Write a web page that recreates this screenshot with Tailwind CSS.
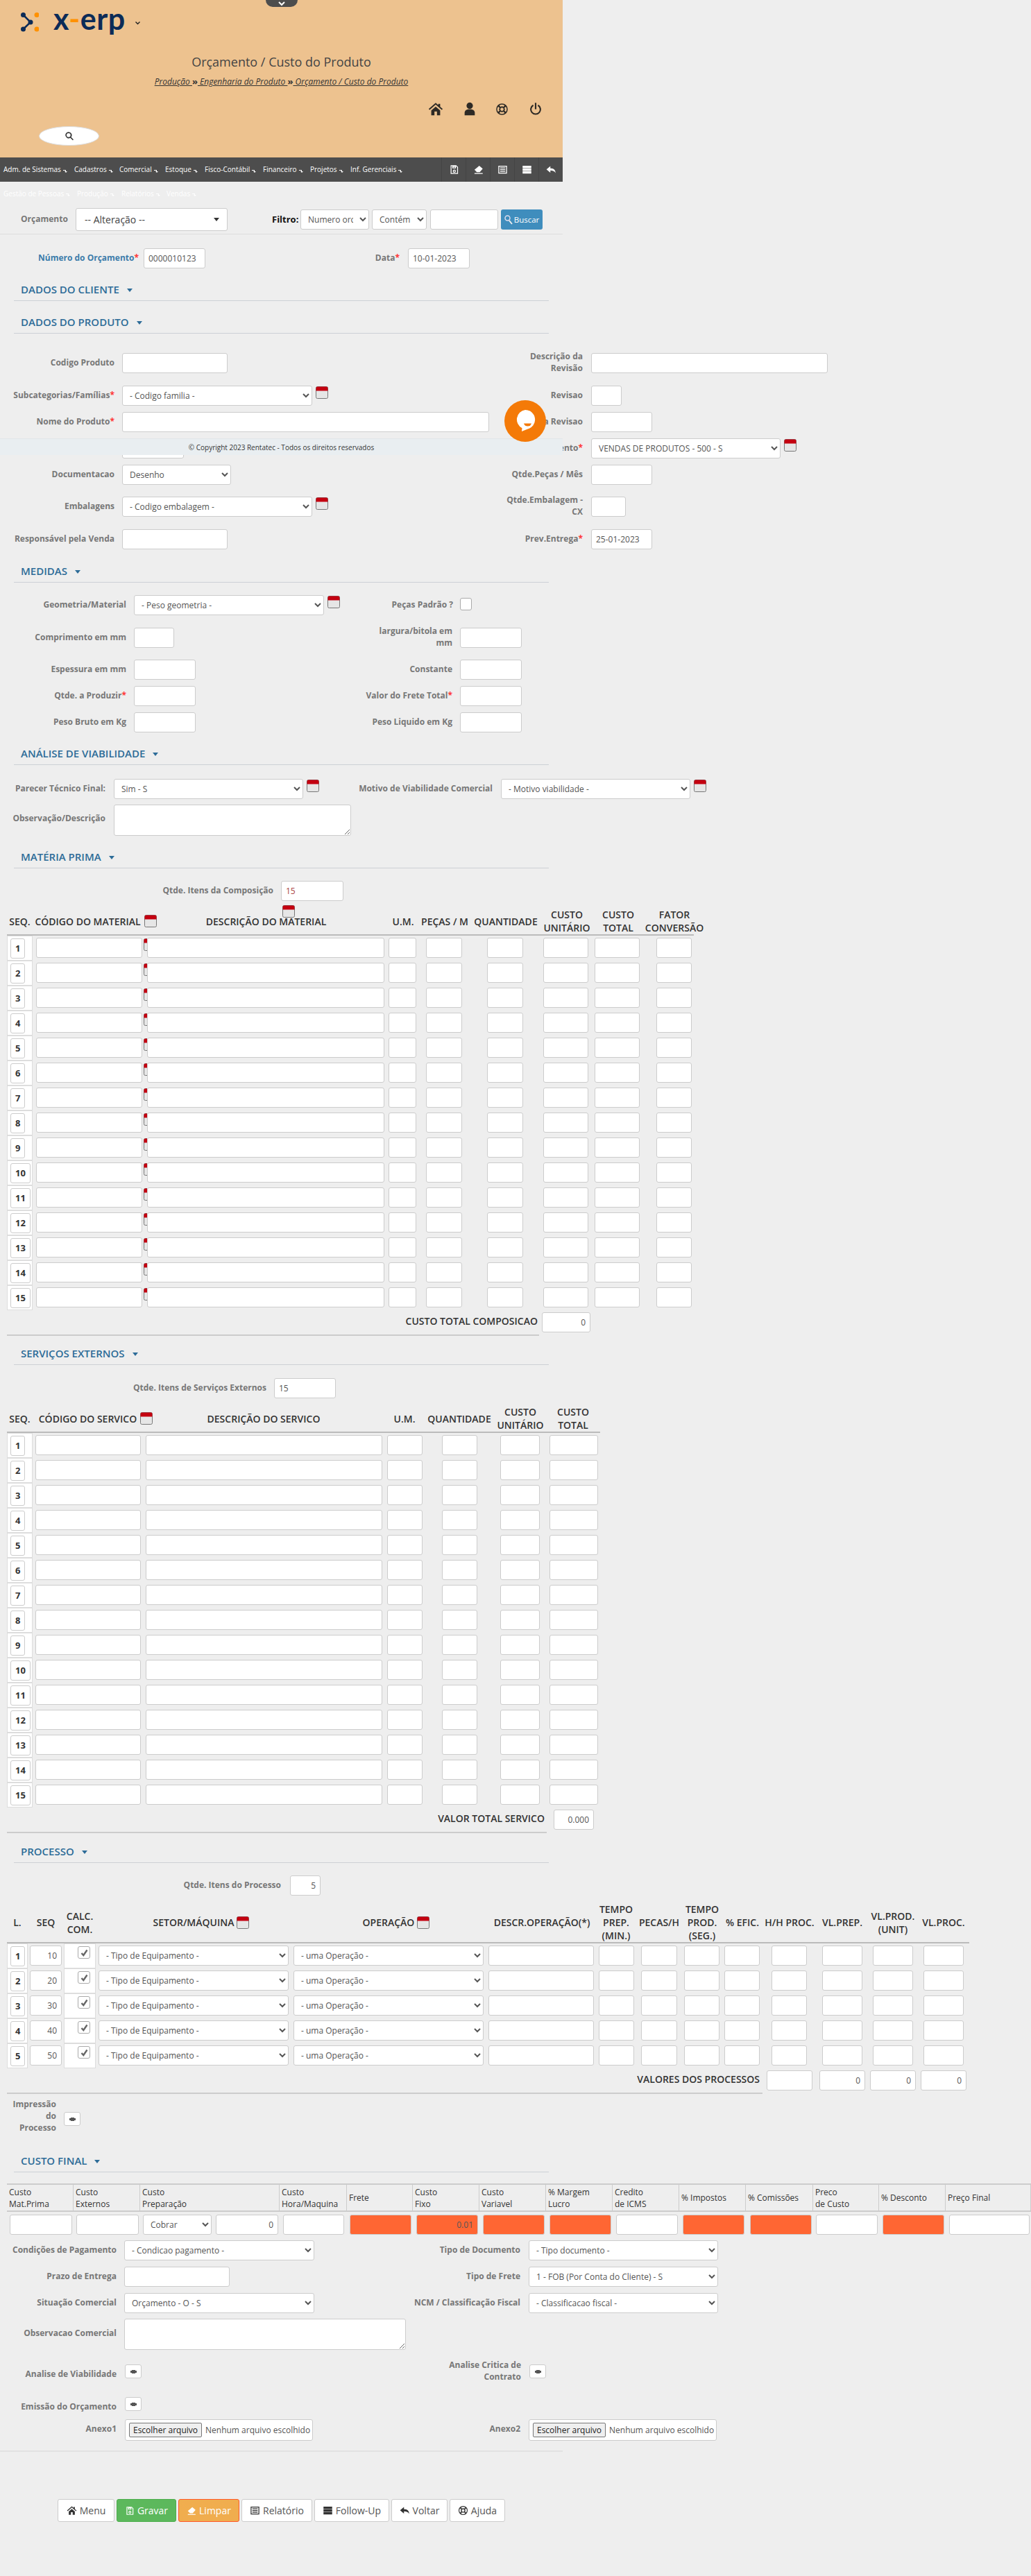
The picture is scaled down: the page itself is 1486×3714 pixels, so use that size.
<!DOCTYPE html>
<html lang="pt-BR">
<head>
    <meta charset="UTF-8">
    <title>Orçamento / Custo do Produto</title>
    <script src="https://cdn.jsdelivr.net/npm/@tailwindcss/browser@4"></script>
</head>
<body class="bg-[#eeeeee] h-[3714px] relative overflow-hidden font-['Open_Sans',sans-serif] text-[12px] text-[#555]">
    <div id="app"></div>

    <!-- top tab, fixed footer and chat bubble lie over the form -->
    <div class="absolute left-[383px] top-0 w-[46px] h-[10px] bg-[#4d4d4d] rounded-b-full flex justify-center items-center">
        <svg width="10" height="7" viewBox="0 0 10 7"><path d="M1 1l4 4 4-4" fill="none" stroke="#fff" stroke-width="2"/></svg>
    </div>
    <div class="absolute left-0 top-[632px] w-[811px] h-[24px] bg-[#e9eef1] border-t border-[#e2e6e9] text-center text-[#333] text-[10px] leading-[24px]">© Copyright 2023 Rentatec - Todos os direitos reservados</div>
    <div class="absolute left-[727px] top-[577px] w-[60px] h-[60px] rounded-full bg-[#f47a08] flex items-center justify-center">
        <svg width="32" height="36" viewBox="0 0 32 36"><path d="M16 2a14 14 0 0 1 3 27.7L11 33l.5-4.700A14 14 0 0 1 16 2z" fill="#fff"/><path d="M14 21.500h11c-1 3-3 4-5.500 4s-4.500-1-5.500-4z" fill="#f47a08"/></svg>
    </div>

    <script>
        const INP = 'block shrink-0 h-[29px] bg-white border border-[#ccc] rounded-[3px] px-[6px] text-[12px] text-[#555] outline-none';
        const LAB = 'shrink-0 text-right font-bold text-[#777] text-[12px] leading-[17px]';
        const TH = 'shrink-0 text-center font-semibold text-[#333] text-[14px] leading-[19px] whitespace-nowrap';

        const ic = {
            home: '<path d="M12 2.500 1 12l1.400 1.500L12 5.300l9.600 8.200L23 12l-4-3.400V4h-3v2z"/><path d="M5 14.500l7-6 7 6V22h-5v-6h-4v6H5z"/>',
            user: '<circle cx="12" cy="7" r="5"/><path d="M4 22v-4c0-3.500 3-5.500 8-5.500s8 2 8 5.500v4z"/>',
            ring: '<path fill-rule="evenodd" d="M12 1.500a10.500 10.500 0 1 0 0 21 10.500 10.500 0 0 0 0-21zm0 2a8.500 8.500 0 0 1 4.800 1.500l-2.200 2.500a5 5 0 0 0-5.200 0L7.200 5A8.500 8.500 0 0 1 12 3.500zM5 7.200l2.500 2.200a5 5 0 0 0 0 5.200L5 16.800a8.500 8.500 0 0 1 0-9.600zm14 0a8.500 8.500 0 0 1 0 9.600l-2.500-2.200a5 5 0 0 0 0-5.200zM12 9a3 3 0 1 1 0 6 3 3 0 0 1 0-6zm-2.600 7.500a5 5 0 0 0 5.200 0l2.200 2.500a8.500 8.500 0 0 1-9.600 0z"/>',
            power: '<path d="M10.700 1.500h2.600v11h-2.600z"/><path d="M7.300 4.500l1.200 2.300a7 7 0 1 0 7 0l1.200-2.300a9.500 9.500 0 1 1-9.400 0z"/>',
            save: '<path fill-rule="evenodd" d="M4 2h13l4 4v16H4zm2 2v16h13V7l-3-3v5H8V4zm5 1v3h2V5zm1.500 7a3.500 3.500 0 1 1 0 7 3.500 3.500 0 0 1 0-7zm0 2a1.500 1.500 0 1 0 0 3 1.500 1.500 0 0 0 0-3z"/>',
            eraser: '<path d="M14 3l8 7-7 8H8.500L3 12.500z"/><path d="M3 20h19v2H3z"/>',
            list: '<path fill-rule="evenodd" d="M2 3h20v18H2zm2 2v14h16V5zm2 2h12v2H6zm0 4h12v2H6zm0 4h12v2H6z"/>',
            grid: '<path d="M2 3h20v5.300H2zm0 6.300h20v5.400H2zm0 6.400h20V21H2z"/>',
            reply: '<path d="M10 4v5c7 0 12 3 12 11-2-4-6-6-12-6v5L1 11.500z"/>',
            search: '<path fill-rule="evenodd" d="M10 2a8 8 0 0 1 6.300 12.900l6 6-2 2-6-6A8 8 0 1 1 10 2zm0 3a5 5 0 1 0 0 10 5 5 0 0 0 0-10z"/>'
        };
        const svg = (name, cls) => `<svg viewBox="0 0 24 24" fill="currentColor" class="${cls}">${ic[name]}</svg>`;

        const cal = () => `<svg viewBox="0 0 18 18" class="shrink-0 w-[18px] h-[18px]"><rect x=".5" y=".5" width="17" height="17" rx="2" fill="#e6e6e6" stroke="#777"/><path d="M.5 6.500V2.500a2 2 0 0 1 2-2h13a2 2 0 0 1 2 2v4z" fill="#c40010"/></svg>`;
        const req = '<span class="text-[#f33]">*</span>';
        const lab = (w, text, star) => `<div class="${LAB} ${w} pt-[5px]">${text}${star ? req : ''}</div>`;
        const lab2 = (w, text) => `<div class="${LAB} ${w} -mt-[4px]">${text}</div>`;
        const inp = (w, val = '', extra = '') => `<input class="${INP} ${w} ${extra}" value="${val}">`;
        const sel = (w, text) => `<select class="${INP} ${w}"><option>${text}</option></select>`;
        const rowTop = (mt, body) => `<div class="flex h-[29px] ${mt}">${body}</div>`;
        const section = (mt, text) => `<div class="ml-[20px] w-[771px] h-[27px] pl-[10px] border-b border-[#ccd0d5] ${mt} font-semibold text-[#2d6c98] text-[15px] leading-[20px] flex gap-[11px]">${text}<span class="mt-[9px] w-0 h-0 border-x-[4px] border-x-transparent border-t-[5px] border-t-[#2d6c98]"></span></div>`;
        const printBtn = (cls) => `<div class="shrink-0 ${cls} w-[24px] h-[20px] bg-white border border-[#ccc] rounded-[3px] flex items-center justify-center"><svg width="9" height="5" viewBox="0 0 9 5"><path d="M2 0h5v1h2v3H7v1H2V4H0V1h2z" fill="#555"/></svg></div>`;
        const seqCell = (n, cls) => `<div class="shrink-0 ${cls} h-[36px] bg-white border border-[#ddd] pt-[3px] pl-[4px]"><div class="inline-flex h-[29px] px-[6px] items-center bg-white border border-[#ccc] rounded-[3px] font-bold text-[#333] text-[13px]">${n}</div></div>`;

        const range = (n) => Array.from({ length: n }, (_, i) => i + 1);

        const navItems = [['Adm. de Sistemas', 'w-[102px]'], ['Cadastros', 'w-[65px]'], ['Comercial', 'w-[66px]'], ['Estoque', 'w-[57px]'], ['Fisco-Contábil', 'w-[84px]'], ['Financeiro', 'w-[68px]'], ['Projetos', 'w-[58px]'], ['Inf. Gerenciais', 'w-[131px]']];
        const navArrow = '<svg width="6" height="5" viewBox="0 0 6 5" class="ml-[3px] mt-[3px]"><path d="M0 1h4v2h2L4 5 2 3h1V2H0z" fill="currentColor"/></svg>';
        const nav = navItems.map(([t, w]) => `<div class="${w} flex items-center whitespace-nowrap">${t}${navArrow}</div>`).join('');
        const navIcons = ['save', 'eraser', 'list', 'grid', 'reply'].map(n => `<div class="w-[35px] border-l border-[#444] flex items-center justify-center text-white">${svg(n, 'w-[15px] h-[15px]')}</div>`).join('');
        const nav2 = [['Gestão de Pessoas', 'w-[106px]'], ['Produção', 'w-[64px]'], ['Relatórios', 'w-[65px]'], ['Vendas', 'w-[60px]']].map(([t, w]) => `<div class="${w} flex items-center whitespace-nowrap">${t}${navArrow}</div>`).join('');

        const header = `
        <div class="w-[811px] h-[227px] bg-[#edc28f] pt-[18px] text-[#333]">
            <div class="ml-[30px] h-[34px] flex">
                <svg width="26" height="30" viewBox="0 0 26 30" class="shrink-0"><path d="M3.500 3.500 14 14 3.500 24" fill="none" stroke="#0c2b57" stroke-width="2.500"/><circle cx="3.500" cy="3.500" r="3.500" fill="#0c2b57"/><circle cx="3.500" cy="24" r="3.500" fill="#0c2b57"/><circle cx="14" cy="14" r="3.500" fill="#0c2b57"/><circle cx="23" cy="3.500" r="3.500" fill="#ff9100"/><circle cx="23" cy="24" r="3.500" fill="#ff9100"/></svg>
                <div class="ml-[21px] -mt-[6px] font-['Lato',sans-serif] font-bold text-[43px] leading-[30px] text-[#0c2b57] tracking-[0.5px] whitespace-nowrap">x<span class="text-[#ff9100]">-</span>erp</div>
                <svg width="7" height="5" viewBox="0 0 7 5" class="ml-[14px] mt-[13px]"><path d="M.5.500l3 3 3-3" fill="none" stroke="#222" stroke-width="1.400"/></svg>
            </div>
            <div class="mt-[23px] h-[28px] text-center text-[#444] text-[18px] leading-[28px]">Orçamento / Custo do Produto</div>
            <div class="mt-[5px] h-[18px] text-center italic text-[#333] text-[12px] leading-[18px]"><span class="underline">Produção </span><b class="not-italic text-[13px]">»</b><span class="underline"> Engenharia do Produto </span><b class="not-italic text-[13px]">»</b><span class="underline"> Orçamento / Custo do Produto</span></div>
            <div class="mt-[20px] h-[22px] flex items-center ml-[617px] text-[#2e2a25]">
                ${svg('home', 'w-[22px] h-[22px]')}${svg('user', 'ml-[26px] w-[24px] h-[22px]')}${svg('ring', 'ml-[25px] w-[19px] h-[19px]')}${svg('power', 'ml-[29px] w-[20px] h-[20px]')}
            </div>
            <div class="mt-[14px] ml-[56px] w-[87px] h-[28px] rounded-[50%] bg-white border border-[#ddd] flex items-center justify-center text-[#333]">${svg('search', 'w-[14px] h-[14px]')}</div>
        </div>
        <div class="w-[811px] h-[35px] bg-[#4d4d4d] flex pl-[5px] text-white text-[10px]">
            <div class="w-[631px] flex">${nav}</div>${navIcons}
        </div>
        <div class="h-[38px] pb-[4px] pl-[5px] w-[811px] flex text-white text-[10px]">${nav2}</div>`;

        const filterRow = `
        <div class="w-[811px] h-[38px] border-b border-[#ddd] flex items-start">
            <div class="ml-[30px] w-[79px] pt-[7px] font-bold text-[#777] text-[12px] leading-[17px]">Orçamento</div>
            <div class="w-[219px] h-[33px] bg-white border border-[#ccc] rounded-[3px] flex items-center pl-[12px] pr-[11px] justify-between text-[14px] text-[#444]">-- Alteração --<span class="w-0 h-0 border-x-[4px] border-x-transparent border-t-[5px] border-t-[#333]"></span></div>
            <div class="ml-[64px] w-[41px] pt-[8px] font-bold text-[#111] text-[13px] leading-[17px]">Filtro:</div>
            <select class="${INP} mt-[2px] w-[99px] h-[28px]"><option>Numero orc</option></select>
            <select class="${INP} ml-[4px] mt-[2px] w-[79px] h-[28px]"><option>Contém</option></select>
            <input class="${INP} ml-[5px] mt-[2px] w-[98px]">
            <div class="ml-[4px] mt-[2px] w-[60px] h-[29px] bg-[#3f8dbd] rounded-[3px] text-white flex items-center justify-center gap-[2px] text-[11.500px]"><svg width="12" height="14" viewBox="0 0 12 14" fill="none"><circle cx="4.500" cy="4.500" r="3.500" stroke="#dde" stroke-width="1.500"/><path d="M7 8l4 5" stroke="#eee" stroke-width="2"/></svg>Buscar</div>
        </div>`;

        const produto = [
            rowTop('mt-[20px]', `<div class="${LAB} w-[200px] pt-[5px] text-[#3c7caa]!">Número do Orçamento${req}</div>${inp('ml-[7px] w-[89px]', '0000010123')}<div class="${LAB} w-[280px] pt-[5px]">Data${req}</div>${inp('ml-[12px] w-[89px]', '10-01-2023')}`),
            section('mt-[20px]', 'DADOS DO CLIENTE'),
            section('mt-[20px]', 'DADOS DO PRODUTO'),
            rowTop('mt-[28px]', lab('w-[165px]', 'Codigo Produto') + inp('ml-[11px] w-[152px]') + lab2('w-[512px]', 'Descrição da<br>Revisão') + inp('ml-[12px] w-[341px]')),
            rowTop('mt-[18px]', lab('w-[165px]', 'Subcategorias/Famílias', 1) + sel('ml-[11px] w-[274px]', '- Codigo familia -') + `<div class="ml-[5px] mt-[1px]">${cal()}</div>` + lab('w-[367px]', 'Revisao') + inp('ml-[12px] w-[44px]')),
            rowTop('mt-[9px]', lab('w-[165px]', 'Nome do Produto', 1) + inp('ml-[11px] w-[529px]') + lab('w-[135px]', 'Data Revisao') + inp('ml-[12px] w-[88px]')),
            rowTop('mt-[9px]', lab('w-[165px]', 'Unidade') + inp('ml-[11px] w-[89px]') + lab('w-[575px]', 'Tipo de Movimento', 1) + sel('ml-[12px] w-[273px]', 'VENDAS DE PRODUTOS - 500 - S') + `<div class="ml-[5px] mt-[1px]">${cal()}</div>`),
            rowTop('mt-[9px]', lab('w-[165px]', 'Documentacao') + sel('ml-[11px] w-[157px]', 'Desenho') + lab('w-[507px]', 'Qtde.Peças / Mês') + inp('ml-[12px] w-[88px]')),
            rowTop('mt-[17px]', lab('w-[165px]', 'Embalagens') + sel('ml-[11px] w-[274px]', '- Codigo embalagem -') + `<div class="ml-[5px] mt-[1px]">${cal()}</div>` + lab2('w-[367px]', 'Qtde.Embalagem -<br>CX') + inp('ml-[12px] w-[50px]')),
            rowTop('mt-[18px]', lab('w-[165px]', 'Responsável pela Venda') + inp('ml-[11px] w-[152px]') + lab('w-[512px]', 'Prev.Entrega', 1) + inp('ml-[12px] w-[88px]', '25-01-2023'))
        ].join('');

        const medidas = [
            section('mt-[21px]', 'MEDIDAS'),
            rowTop('mt-[18px]', lab('w-[182px]', 'Geometria/Material') + sel('ml-[11px] w-[274px]', '- Peso geometria -') + `<div class="ml-[5px] mt-[1px]">${cal()}</div>` + lab('w-[163px]', 'Peças Padrão ?') + `<div class="ml-[10px] mt-[4px] w-[17px] h-[18px] bg-white border border-[#aaa] rounded-[3px]"></div>`),
            rowTop('mt-[18px]', lab('w-[182px]', 'Comprimento em mm') + inp('ml-[11px] w-[58px]') + lab2('w-[401px]', 'largura/bitola em<br>mm') + inp('ml-[11px] w-[89px]')),
            rowTop('mt-[17px]', lab('w-[182px]', 'Espessura em mm') + inp('ml-[11px] w-[89px]') + lab('w-[370px]', 'Constante') + inp('ml-[11px] w-[89px]')),
            rowTop('mt-[9px]', lab('w-[182px]', 'Qtde. a Produzir', 1) + inp('ml-[11px] w-[89px]') + lab('w-[370px]', 'Valor do Frete Total', 1) + inp('ml-[11px] w-[89px]')),
            rowTop('mt-[9px]', lab('w-[182px]', 'Peso Bruto em Kg') + inp('ml-[11px] w-[89px]') + lab('w-[370px]', 'Peso Liquido em Kg') + inp('ml-[11px] w-[89px]')),
            section('mt-[20px]', 'ANÁLISE DE VIABILIDADE'),
            rowTop('mt-[20px]', lab('w-[152px]', 'Parecer Técnico Final:') + sel('ml-[12px] w-[273px]', 'Sim - S') + `<div class="ml-[5px] mt-[1px]">${cal()}</div>` + lab('w-[250px]', 'Motivo de Viabilidade Comercial') + sel('ml-[12px] w-[273px]', '- Motivo viabilidade -') + `<div class="ml-[5px] mt-[1px]">${cal()}</div>`),
            `<div class="flex h-[45px] mt-[8px]">${lab('w-[152px] pt-[11px]', 'Observação/Descrição')}<textarea class="ml-[12px] w-[342px] h-[45px] bg-white border border-[#ccc] rounded-[3px] outline-none"></textarea></div>`
        ].join('');

        const matRow = (n) => `<div class="flex h-[36px] ml-[10px]">${seqCell(n, 'w-[37px]')}<div class="flex pt-[3px]">
            ${inp('ml-[5px] w-[153px]')}<div class="ml-[2px] w-[5px] mt-[1px] h-[18px] overflow-hidden">${cal()}</div>${inp('w-[342px]')}${inp('ml-[6px] w-[40px]')}${inp('ml-[14px] w-[52px]')}${inp('ml-[36px] w-[52px]')}${inp('ml-[29px] w-[65px]')}${inp('ml-[9px] w-[65px]')}${inp('ml-[24px] w-[51px]')}</div></div>`;
        const materia = `
            ${section('mt-[20px]', 'MATÉRIA PRIMA')}
            ${rowTop('mt-[18px]', lab('w-[394px]', 'Qtde. Itens da Composição') + inp('ml-[11px] w-[90px]', '15', 'text-[#a44]'))}
            <div class="relative ml-[10px] w-[990px] h-[40px] mt-[10px] border-b-2 border-[#bbb] flex items-center">
                <div class="${TH} w-[37px]">SEQ.</div>
                <div class="${TH} w-[182px] flex items-center justify-center gap-[5px]">CÓDIGO DO MATERIAL ${cal()}</div>
                <div class="${TH} w-[309px]">DESCRIÇÃO DO MATERIAL</div>
                <div class="${TH} ml-[23px] w-[40px]">U.M.</div>
                <div class="${TH} ml-[4px] w-[72px]">PEÇAS / M</div>
                <div class="${TH} ml-[2px] w-[100px]">QUANTIDADE</div>
                <div class="${TH} w-[76px]">CUSTO<br>UNITÁRIO</div>
                <div class="${TH} w-[72px]">CUSTO<br>TOTAL</div>
                <div class="${TH} w-[90px]">FATOR<br>CONVERSÃO</div>
                <div class="absolute left-[397px] -top-[4px]">${cal()}</div>
            </div>
            ${range(15).map(matRow).join('')}
            <div class="flex h-[29px] mt-[3px]"><div class="${TH} w-[775px] text-right! pt-[3px]">CUSTO TOTAL COMPOSICAO</div>${inp('ml-[6px] w-[70px] text-right', '0')}</div>
            <div class="ml-[10px] mt-[3px] w-[767px] border-b-2 border-[#ccc]"></div>`;

        const srvRow = (n) => `<div class="flex h-[36px] ml-[10px]">${seqCell(n, 'w-[37px]')}<div class="flex pt-[3px]">
            ${inp('ml-[4px] w-[152px]')}${inp('ml-[7px] w-[341px]')}${inp('ml-[7px] w-[51px]')}${inp('ml-[28px] w-[51px]')}${inp('ml-[33px] w-[57px]')}${inp('ml-[14px] w-[70px]')}</div></div>`;
        const servicos = `
            ${section('mt-[15px]', 'SERVIÇOS EXTERNOS')}
            ${rowTop('mt-[19px]', lab('w-[384px]', 'Qtde. Itens de Serviços Externos') + inp('ml-[11px] w-[89px]', '15'))}
            <div class="ml-[10px] w-[855px] h-[40px] mt-[10px] border-b-2 border-[#bbb] flex items-center">
                <div class="${TH} w-[37px]">SEQ.</div>
                <div class="${TH} w-[182px] flex items-center justify-center gap-[5px]">CÓDIGO DO SERVICO ${cal()}</div>
                <div class="${TH} w-[302px]">DESCRIÇÃO DO SERVICO</div>
                <div class="${TH} ml-[24px] w-[56px]">U.M.</div>
                <div class="${TH} ml-[1px] w-[100px]">QUANTIDADE</div>
                <div class="${TH} w-[76px]">CUSTO<br>UNITÁRIO</div>
                <div class="${TH} w-[76px]">CUSTO<br>TOTAL</div>
            </div>
            ${range(15).map(srvRow).join('')}
            <div class="flex h-[29px] mt-[3px]"><div class="${TH} w-[785px] text-right! pt-[3px]">VALOR TOTAL SERVICO</div>${inp('ml-[13px] w-[58px] text-right', '0.000')}</div>
            <div class="ml-[10px] mt-[3px] w-[778px] border-b-2 border-[#ccc]"></div>`;

        const chk = `<div class="ml-[19px] w-[18px] h-[18px] bg-white border border-[#aaa] rounded-[3px] flex items-center justify-center"><svg width="11" height="11" viewBox="0 0 11 11"><path d="M1.500 6l2.800 3L9.500 1.500" fill="none" stroke="#666" stroke-width="2.400"/></svg></div>`;
        const procRow = (n) => `<div class="flex h-[36px] ml-[10px]">${seqCell(n, 'w-[30px]')}<div class="pt-[3px]">${inp('ml-[3px] w-[46px] text-right', n * 10)}</div>
            <div class="ml-[3px] w-[46px] h-[36px] pt-[3px] bg-white border border-[#ddd]">${chk}</div>
            <div class="flex pt-[3px]">${sel('ml-[4px] w-[274px]', '- Tipo de Equipamento -')}${sel('ml-[7px] w-[274px]', '- uma Operação -')}${inp('ml-[7px] w-[152px]')}${inp('ml-[7px] w-[51px]')}${inp('ml-[10px] w-[52px]')}${inp('ml-[10px] w-[51px]')}${inp('ml-[7px] w-[51px]')}${inp('ml-[17px] w-[51px]')}${inp('ml-[22px] w-[58px]')}${inp('ml-[15px] w-[58px]')}${inp('ml-[15px] w-[58px]')}</div></div>`;
        const processo = `
            ${section('mt-[16px]', 'PROCESSO')}
            ${rowTop('mt-[18px]', lab('w-[405px]', 'Qtde. Itens do Processo') + inp('ml-[13px] w-[44px] text-right', '5'))}
            <div class="ml-[10px] w-[1387px] h-[59px] mt-[10px] border-b-2 border-[#bbb] flex items-center">
                <div class="${TH} w-[30px]">L.</div>
                <div class="${TH} w-[52px]">SEQ</div>
                <div class="${TH} w-[46px]">CALC.<br>COM.</div>
                <div class="${TH} w-[304px] flex items-center justify-center gap-[4px]">SETOR/MÁQUINA ${cal()}</div>
                <div class="${TH} w-[258px] flex items-center justify-center gap-[4px]">OPERAÇÃO ${cal()}</div>
                <div class="${TH} ml-[4px] w-[154px]">DESCR.OPERAÇÃO(*)</div>
                <div class="${TH} w-[60px]">TEMPO<br>PREP.<br>(MIN.)</div>
                <div class="${TH} w-[64px]">PECAS/H</div>
                <div class="${TH} w-[60px]">TEMPO<br>PROD.<br>(SEG.)</div>
                <div class="${TH} w-[56px]">% EFIC.</div>
                <div class="${TH} w-[80px]">H/H PROC.</div>
                <div class="${TH} w-[72px]">VL.PREP.</div>
                <div class="${TH} w-[74px]">VL.PROD.<br>(UNIT)</div>
                <div class="${TH} w-[72px]">VL.PROC.</div>
            </div>
            ${range(5).map(procRow).join('')}
            <div class="flex h-[29px] mt-[3px]"><div class="${TH} w-[1095px] text-right! pt-[3px]">VALORES DOS PROCESSOS</div>${inp('ml-[10px] w-[66px]')}${inp('ml-[10px] w-[66px] text-right', '0')}${inp('ml-[7px] w-[66px] text-right', '0')}${inp('ml-[7px] w-[66px] text-right', '0')}</div>
            <div class="ml-[10px] mt-[3px] w-[1089px] border-b-2 border-[#ccc]"></div>
            <div class="flex mt-[6px] h-[53px]"><div class="${LAB} w-[81px]">Impressão<br>do<br>Processo</div>${printBtn('ml-[11px] mt-[20px]')}</div>`;

        const finalCols = [['Custo<br>Mat.Prima', 'w-[96px]'], ['Custo<br>Externos', 'w-[96px]'], ['Custo<br>Preparação', 'w-[201px]'], ['Custo<br>Hora/Maquina', 'w-[97px]'], ['Frete', 'w-[95px]'], ['Custo<br>Fixo', 'w-[96px]'], ['Custo<br>Variavel', 'w-[96px]'], ['% Margem<br>Lucro', 'w-[96px]'], ['Credito<br>de ICMS', 'w-[96px]'], ['% Impostos', 'w-[96px]'], ['% Comissões', 'w-[97px]'], ['Preco<br>de Custo', 'w-[95px]'], ['% Desconto', 'w-[96px]'], ['Preço Final', 'w-[123px]']];
        const ORANGE = 'bg-[#ff6633]!';
        const custoFinal = `
            ${section('mt-[27px]', 'CUSTO FINAL')}
            <div class="ml-[10px] mt-[16px] h-[41px] w-[1476px] flex border-y-2 border-[#ccc] text-[#333] text-[12px] leading-[17px]">
                ${finalCols.map(([t, w]) => `<div class="${w} shrink-0 h-full border-r border-[#ccc] flex items-center pl-[3px] whitespace-nowrap"><span>${t}</span></div>`).join('')}
            </div>
            <div class="flex mt-[4px] h-[29px]">
                ${inp('ml-[14px] w-[90px]')}${inp('ml-[6px] w-[90px]')}${sel('ml-[6px] w-[99px]', 'Cobrar')}${inp('ml-[6px] w-[90px] text-right', '0')}${inp('ml-[7px] w-[88px]')}${inp(`ml-[8px] w-[89px] ${ORANGE}`)}${inp(`ml-[7px] w-[89px] text-right ${ORANGE}`, '0.01')}${inp(`ml-[7px] w-[89px] ${ORANGE}`)}${inp(`ml-[7px] w-[89px] ${ORANGE}`)}${inp('ml-[7px] w-[89px]')}${inp(`ml-[7px] w-[89px] ${ORANGE}`)}${inp(`ml-[8px] w-[89px] ${ORANGE}`)}${inp('ml-[6px] w-[89px]')}${inp(`ml-[7px] w-[89px] ${ORANGE}`)}${inp('ml-[7px] w-[116px]')}
            </div>
            ${rowTop('mt-[8px]', lab('w-[168px]', 'Condições de Pagamento') + sel('ml-[11px] w-[274px]', '- Condicao pagamento -') + lab('w-[297px]', 'Tipo de Documento') + sel('ml-[12px] w-[273px]', '- Tipo documento -'))}
            ${rowTop('mt-[9px]', lab('w-[168px]', 'Prazo de Entrega') + inp('ml-[11px] w-[152px]') + lab('w-[419px]', 'Tipo de Frete') + sel('ml-[12px] w-[273px]', '1 - FOB (Por Conta do Cliente) - S'))}
            ${rowTop('mt-[9px]', lab('w-[168px]', 'Situação Comercial') + sel('ml-[11px] w-[274px]', 'Orçamento - O - S') + lab('w-[297px]', 'NCM / Classificação Fiscal') + sel('ml-[12px] w-[273px]', '- Classificacao fiscal -'))}
            <div class="flex h-[45px] mt-[8px]">${lab('w-[168px] pt-[12px]', 'Observacao Comercial')}<textarea class="ml-[11px] w-[406px] h-[45px] bg-white border border-[#ccc] rounded-[3px] outline-none"></textarea></div>
            <div class="flex h-[20px] mt-[21px]">${lab('w-[168px] pt-[0px]', 'Analise de Viabilidade')}${printBtn('ml-[12px]')}<div class="${LAB} w-[547px] -mt-[8px]">Analise Critica de<br>Contrato</div>${printBtn('ml-[12px]')}</div>
            <div class="flex h-[20px] mt-[27px]">${lab('w-[168px] pt-[0px]', 'Emissão do Orçamento')}${printBtn('ml-[12px]')}</div>
            <div class="flex h-[31px] mt-[12px]">${lab('w-[168px]', 'Anexo1')}<div class="ml-[12px] w-[271px] h-[31px] shrink-0 bg-white border border-[#ccc] rounded-[3px] flex items-center pl-[5px] whitespace-nowrap"><button class="w-[105px] h-[21px] bg-[#efefef] border border-[#767676] rounded-[2px] text-[#222] text-[12px]">Escolher arquivo</button><span class="ml-[5px]">Nenhum arquivo escolhido</span></div>
                ${lab('w-[299px]', 'Anexo2')}<div class="ml-[12px] w-[271px] h-[31px] shrink-0 bg-white border border-[#ccc] rounded-[3px] flex items-center pl-[5px] whitespace-nowrap"><button class="w-[105px] h-[21px] bg-[#efefef] border border-[#767676] rounded-[2px] text-[#222] text-[12px]">Escolher arquivo</button><span class="ml-[5px]">Nenhum arquivo escolhido</span></div>
            </div>
            <div class="mt-[14px] w-[811px] border-b-2 border-[#e2e2e2]"></div>`;

        const BTN = 'h-[33px] bg-white border border-[#ccc] rounded-[3px] flex items-center justify-center gap-[4px] text-[14px] text-[#555]';
        const buttons = `
            <div class="flex ml-[83px] mt-[68px] gap-[3px]">
                <div class="${BTN} w-[82px]"><span class="text-[#333]">${svg('home', 'w-[15px] h-[15px]')}</span>Menu</div>
                <div class="${BTN} w-[86px] bg-[#5cb85c]! border-[#4cae4c]! text-white!">${svg('save', 'w-[14px] h-[14px]')}Gravar</div>
                <div class="${BTN} w-[88px] bg-[#f0ad4e]! border-[#ff5a2a]! text-white!">${svg('eraser', 'w-[14px] h-[14px]')}Limpar</div>
                <div class="${BTN} w-[102px]"><span class="text-[#333]">${svg('list', 'w-[15px] h-[15px]')}</span>Relatório</div>
                <div class="${BTN} w-[108px]"><span class="text-[#333]">${svg('grid', 'w-[15px] h-[15px]')}</span>Follow-Up</div>
                <div class="${BTN} w-[81px]"><span class="text-[#333]">${svg('reply', 'w-[15px] h-[15px]')}</span>Voltar</div>
                <div class="${BTN} w-[80px]"><span class="text-[#333]">${svg('ring', 'w-[15px] h-[15px]')}</span>Ajuda</div>
            </div>`;

        document.getElementById('app').innerHTML = header + filterRow + produto + medidas + materia + servicos + processo + custoFinal + buttons;
    </script>
</body>
</html>
